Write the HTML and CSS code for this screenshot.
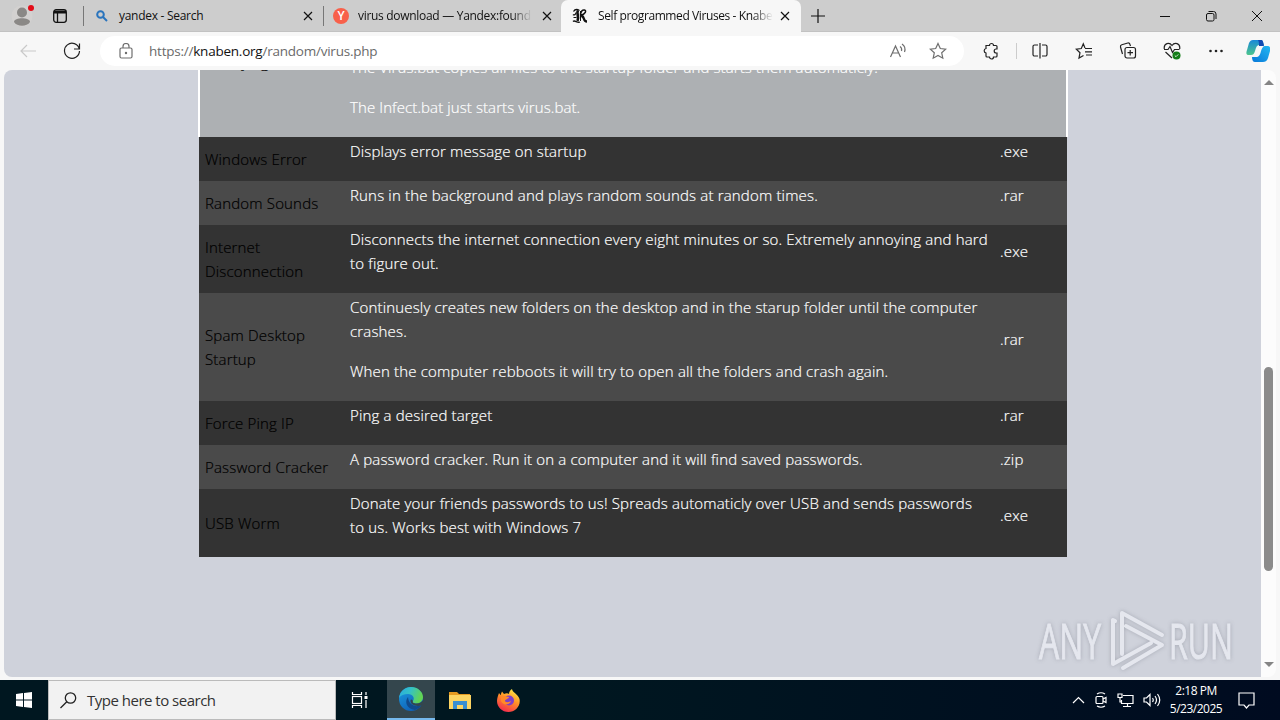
FILE: index.html
```html
<!DOCTYPE html>
<html lang="en">
<head>
  <meta charset="UTF-8">
  <title>Self programmed Viruses - Knaben</title>
  <meta name="viewport" content="width=device-width, initial-scale=1.0">
  <link rel="stylesheet" href="styles.css">
</head>
<body>

  <!-- tabs -->
  <header class="tabbar">
    <div class="profile">
      <svg width="22" height="22" viewBox="0 0 22 22"><circle cx="11" cy="11" r="10.500" fill="#d3d1d0"/><circle cx="11" cy="7.500" r="5" fill="#8a8886"/><path d="M3 17c0-5 16-5 16 0-3 5-13 5-16 0z" fill="#8a8886"/></svg>
      <span class="dot"></span>
    </div>
    <svg class="workspaces" width="16" height="16" viewBox="0 0 16 16" fill="none" stroke="#111" stroke-width="1.300"><rect x="1.700" y="1.700" width="12.600" height="12.600" rx="2.500"/><path d="M2 4h12" stroke-width="3"/><path d="M5.500 5v9"/></svg>
    <div class="tab tab-search">
      <svg width="12" height="12" viewBox="0 0 12 12" fill="none" stroke="#2a74bd" stroke-width="2"><circle cx="4.500" cy="4.500" r="3.300"/><path d="M7 7l4 4"/></svg>
      <span class="title">yandex - Search</span>
      <svg class="x" width="10" height="10" viewBox="0 0 10 10"><path d="M1 1l8 8M9 1l-8 8"/></svg>
    </div>
    <div class="tab tab-yandex">
      <span class="ya">Y</span>
      <span class="title fade">virus download — Yandex:found</span>
      <svg class="x" width="10" height="10" viewBox="0 0 10 10"><path d="M1 1l8 8M9 1l-8 8"/></svg>
    </div>
    <div class="tab tab-active">
      <svg width="16" height="16" viewBox="0 0 16 16" fill="none" stroke="#111"><path d="M1.500 3.500C3 1 5 1 7.500 2.500M1 6.500c1 1 3 0 3-2M1 13.500c2-2 4 2 7 .5" stroke-width="1.300"/><path d="M6 2.500c-2 3 1.500 5-.5 10.500" stroke-width="2.600"/><path d="M8.500 7.500c0-4 2-6 4-5.500 2 .5 1.500 4-4 5.500" stroke-width="1.500"/><path d="M9 8c4-.5 1.500 5.500 6 5.500" stroke-width="2.400"/><path d="M8.500 3v10M1.500 9.500h3" stroke-width="1"/></svg>
      <span class="title fade">Self programmed Viruses - Knabe</span>
      <svg class="x" width="10" height="10" viewBox="0 0 10 10"><path d="M1 1l8 8M9 1l-8 8"/></svg>
    </div>
    <svg class="newtab" width="14" height="14" viewBox="0 0 14 14" stroke="#111" stroke-width="1.200"><path d="M7 0v14M0 7h14"/></svg>
    <div class="window-buttons">
      <svg width="12" height="12" viewBox="0 0 12 12"><path d="M1 6.500h10"/></svg>
      <svg width="12" height="12" viewBox="0 0 12 12"><rect x="1.500" y="3.500" width="7.500" height="7.500" rx="1.500"/><path d="M3.500 1.500h5a2.500 2.500 0 0 1 2.500 2.500v5"/></svg>
      <svg width="12" height="12" viewBox="0 0 12 12"><path d="M1 1l10 10M11 1L1 11"/></svg>
    </div>
  </header>

  <!-- address bar -->
  <div class="toolbar">
    <svg class="back" width="18" height="18" viewBox="0 0 18 18"><path d="M17 9H2M8 3L2 9l6 6"/></svg>
    <svg class="reload" width="18" height="18" viewBox="0 0 18 18"><path d="M16.300 7A7.500 7.500 0 1 0 16.500 9M16.500 1.500V7H11"/></svg>
    <div class="address">
      <svg class="lock" width="14" height="16" viewBox="0 0 14 16"><rect x="1" y="5" width="12" height="10" rx="1.500"/><path d="M4 5V3.500a3 3 0 0 1 6 0V5"/><circle cx="7" cy="10" r=".6"/></svg>
      <span class="url">https://<b>knaben.org</b>/random/virus.php</span>
      <svg class="read" width="18" height="16" viewBox="0 0 18 16"><path d="M1.500 14L6.500 3l5 11M3.300 10h6.400M11 3.500c1.500 1 2 2.500 1.500 4.500M13 1c3 2 3.500 5 2.500 8"/></svg>
      <svg class="fav" width="18" height="18" viewBox="0 0 18 18"><path d="M9 1.500l2.300 5 5.400.6-4 3.700 1.100 5.400L9 13.500l-4.800 2.700 1.100-5.400-4-3.700 5.400-.6z"/></svg>
    </div>
    <div class="tools">
      <svg width="18" height="18" viewBox="0 0 18 18"><path d="M4 3.500h3.500a2 2 0 0 1 4 0H14a1 1 0 0 1 1 1V7h-.8a2 2 0 0 0 0 4h.8v3a1 1 0 0 1-1 1h-2.500a2 2 0 0 1-4 0H5a1 1 0 0 1-1-1v-3a2.300 2.300 0 0 1 0-4.500z"/></svg>
      <i class="sep"></i>
      <svg width="18" height="18" viewBox="0 0 18 18"><path d="M7 3H3.500A1.500 1.500 0 0 0 2 4.500v8A1.500 1.500 0 0 0 3.500 14H7M11 3h3.500A1.500 1.500 0 0 1 16 4.500v8a1.500 1.500 0 0 1-1.500 1.500H11M9 1v15.500"/></svg>
      <svg width="18" height="18" viewBox="0 0 18 18"><path d="M10 6L8.300 1.800 6.300 6.500l-5 .7 3.700 3.500-1 5.300 4.500-2.500M10 6.500h7M10 9.800h7M11 13h6"/></svg>
      <svg width="18" height="18" viewBox="0 0 18 18"><path d="M3.500 12L1.500 5a2 2 0 0 1 1.300-2.300l6-1.700A2 2 0 0 1 11 2.500l.5 1.500"/><rect x="6" y="5.500" width="10.500" height="10.500" rx="2"/><path d="M11.200 8v5.500M8.500 10.700H14"/></svg>
      <svg width="18" height="18" viewBox="0 0 18 18"><path d="M1.300 7C.5 1 6.500 0 9 3.500 11.500 0 17.500 1 16.700 7M1 7.500h4l2-3 2.500 6 2-3h5M2.500 10L9 16"/><circle cx="13.500" cy="13.500" r="4" fill="#137d17" stroke="none"/><path d="M11.800 13.500l1.200 1.200 2.300-2.300" stroke="#fff" stroke-width=".8"/></svg>
      <svg width="18" height="18" viewBox="0 0 18 18"><g fill="#222" stroke="none"><circle cx="3.500" cy="9" r="1.300"/><circle cx="9" cy="9" r="1.300"/><circle cx="14.500" cy="9" r="1.300"/></g></svg>
    </div>
    <svg class="copilot" width="24" height="24" viewBox="0 0 24 24">
      <defs>
        <linearGradient id="cpA" x1="0" y1="0" x2="0" y2="1"><stop offset="0" stop-color="#1988d8"/><stop offset="1" stop-color="#4cc58c"/></linearGradient>
        <linearGradient id="cpB" x1="0" y1="1" x2="1" y2="0"><stop offset="0" stop-color="#0878d8"/><stop offset="1" stop-color="#22b8f2"/></linearGradient>
      </defs>
      <path d="M7 1h8c2 0 2 2 3 5h-5c-2 0-3 2-4 6-1 3-2 4-4 4H3c-3 0-3-2-2-5l2-7c1-2 2-3 4-3z" fill="url(#cpA)"/>
      <path d="M17 23H9c-2 0-3-2-3-5h4c3 0 4-2 5-6 1-3 2-5 4-5h2c3 0 4 2 3 5l-2 7c-1 3-3 4-5 4z" fill="url(#cpB)"/>
      <path d="M13 1h2c2 0 2 2 3 6h-5c0-3 0-4-1-6z" fill="#124ab3"/>
    </svg>
  </div>

  <!-- page -->
  <main class="frame">
    <div class="page">
      <table class="viruses">
        <tr class="hover">
          <td class="name">Annoying</td>
          <td class="desc"><p>The Virus.bat copies all files to the startup folder and starts them automaticly.</p><p>The Infect.bat just starts virus.bat.</p></td>
          <td></td>
        </tr>
        <tr>
          <td class="name">Windows Error</td>
          <td class="desc"><p>Displays error message on startup</p></td>
          <td><p>.exe</p></td>
        </tr>
        <tr>
          <td class="name">Random Sounds</td>
          <td class="desc"><p>Runs in the background and plays random sounds at random times.</p></td>
          <td><p>.rar</p></td>
        </tr>
        <tr>
          <td class="name">Internet<br>Disconnection</td>
          <td class="desc"><p>Disconnects the internet connection every eight minutes or so. Extremely annoying and hard<br>to figure out.</p></td>
          <td><p>.exe</p></td>
        </tr>
        <tr>
          <td class="name">Spam Desktop<br>Startup</td>
          <td class="desc"><p>Continuesly creates new folders on the desktop and in the starup folder until the computer<br>crashes.</p><p>When the computer rebboots it will try to open all the folders and crash again.</p></td>
          <td><p>.rar</p></td>
        </tr>
        <tr>
          <td class="name">Force Ping IP</td>
          <td class="desc"><p>Ping a desired target</p></td>
          <td><p>.rar</p></td>
        </tr>
        <tr>
          <td class="name">Password Cracker</td>
          <td class="desc"><p>A password cracker. Run it on a computer and it will find saved passwords.</p></td>
          <td><p>.zip</p></td>
        </tr>
        <tr>
          <td class="name">USB Worm</td>
          <td class="desc"><p>Donate your friends passwords to us! Spreads automaticly over USB and sends passwords<br>to us. Works best with Windows 7</p></td>
          <td><p>.exe</p></td>
        </tr>
      </table>
    </div>
    <div class="scrollbar">
      <i class="up"></i>
      <i class="thumb"></i>
      <i class="down"></i>
    </div>
    <svg class="watermark" width="204" height="68" viewBox="0 0 204 68">
      <text x="7" y="51" textLength="62" lengthAdjust="spacingAndGlyphs">ANY</text>
      <text x="137" y="51" textLength="64" lengthAdjust="spacingAndGlyphs">RUN</text>
      <g fill="none" stroke="#eceef5" stroke-width="4" stroke-linecap="round" stroke-linejoin="round">
        <path d="M83 13L81 12V56L119 35M90 46V5L130 27M94 18L130 37L91 60"/>
      </g>
    </svg>
  </main>

  <!-- taskbar -->
  <footer class="taskbar">
    <div class="start"><svg width="16" height="16" viewBox="0 0 16 16" fill="#fff"><path d="M0 2l7-1v6.500H0zM8 .9L16 0v7.500H8zM0 8.500h7V15l-7-1zM8 8.500h8V16l-8-.9z"/></svg></div>
    <div class="searchbox">
      <svg width="17" height="17" viewBox="0 0 17 17" fill="none" stroke="#222" stroke-width="1.300"><circle cx="10.500" cy="6" r="5.200"/><path d="M6.800 9.700L.5 16"/></svg>
      <span>Type here to search</span>
    </div>
    <div class="app taskview"><svg width="17" height="16" viewBox="0 0 17 16" fill="none" stroke="#fff" stroke-width="1.200"><rect x="1.500" y="4.500" width="9" height="7"/><path d="M1.500 0v2.500h9V0M1.500 16v-2.500h9V16M15 0v3M15 8v8"/><path d="M13.500 5.500h3" stroke-width="3"/></svg></div>
    <div class="app open">
      <svg width="24" height="24" viewBox="0 0 24 24">
        <defs>
          <linearGradient id="edA" x1="0" y1="0" x2="1" y2=".3"><stop offset="0" stop-color="#28a9e0"/><stop offset=".5" stop-color="#35c1c6"/><stop offset="1" stop-color="#62d453"/></linearGradient>
          <linearGradient id="edB" x1="0" y1="0" x2=".6" y2="1"><stop offset="0" stop-color="#1b9de2"/><stop offset="1" stop-color="#0f5fb5"/></linearGradient>
        </defs>
        <circle cx="12" cy="12" r="12" fill="url(#edB)"/>
        <path d="M0 11C1 4 6 0 12 0c7 0 12 5 12 10 0 4-3 6.500-6.500 6.500-3 0-4.500-1-3.500-2.500 2-3 0-7-5-7-4 0-7.500 1.500-9 4z" fill="url(#edA)"/>
        <path d="M9 10c-4 5-1 12 7 13 3-1 5-3 6.500-5-6 3-13 0-13.500-8z" fill="#114a8b"/>
        <path d="M14 14c-1 1.500.5 2.500 3.500 2.500 3 0 4.500-1 6.500-3v3l-1.500 2c-6 1.500-11-1-11-4.500 0-2 1.500-2 2.500 0z" fill="#34464d"/>
      </svg>
    </div>
    <div class="app"><svg width="22" height="19" viewBox="0 0 22 19"><path d="M0 1h8l2 2h11v3H0z" fill="#e59a20"/><path d="M0 4h22v14H0z" fill="#fcd462"/><path d="M4 18v-8h14v8h-4v-4H8v4z" fill="#3a8ed0"/></svg></div>
    <div class="app">
      <svg width="23" height="23" viewBox="0 0 23 23">
        <defs><linearGradient id="ff" x1=".8" y1="0" x2=".3" y2="1"><stop offset="0" stop-color="#fff04a"/><stop offset=".45" stop-color="#ff9426"/><stop offset="1" stop-color="#f5284f"/></linearGradient></defs>
        <path d="M2 4l1.500 2L5 2.500 7 5c2-1 4-1 5 0 0-2 1-4 3-5 0 3 6 5 7.500 10C24 17 18 23 11.500 23S0 18 0 12c0-3 1-5 2-8z" fill="url(#ff)"/>
        <circle cx="12" cy="11.500" r="5" fill="#7e3fc8"/>
        <path d="M4 8c3-2 5 0 8 0 0 2-4 2-4 4 1 2 4 1 6 0-1 4-8 5-10 0z" fill="#ff8a28"/>
      </svg>
    </div>
    <div class="tray">
      <svg width="13" height="8" viewBox="0 0 13 8"><path d="M1 7l5.500-5.500L12 7"/></svg>
      <svg width="14" height="16" viewBox="0 0 14 16"><rect x="2" y="4.500" width="7" height="7" rx="1"/><path d="M9 7l3-1.500v5L9 9M3 2q4-2.500 8 0M3 14q4 2.500 8 0"/></svg>
      <svg width="17" height="14" viewBox="0 0 17 14"><path d="M6 2.500h10v8H4.500V7M10.500 10.500v3M6 13.500h8M1 1h4v3.500H1zM3 4.500V9h2"/></svg>
      <svg width="18" height="14" viewBox="0 0 18 14"><path d="M1 5h2.500L7 1.500v11L3.500 9H1zM9.500 5q1.500 2 0 4M12 3q3 4 0 8M14.500 1q4.500 6 0 12"/></svg>
    </div>
    <div class="clock"><span>2:18 PM</span><span>5/23/2025</span></div>
    <svg class="notify" width="17" height="17" viewBox="0 0 17 17" fill="none" stroke="#fff" stroke-width="1.200"><path d="M1 1h15v12h-5l-2.500 3L6 13H1z"/></svg>
  </footer>

</body>
</html>
```
FILE: styles.css
```css
* {
  box-sizing: border-box;
}
body {
  margin: 0;
  width: 1280px;
  height: 720px;
  overflow: hidden;
  display: flex;
  flex-direction: column;
  background: #f7f7f7;
  font-family: "Open Sans", "Noto Sans", sans-serif;
  color: #111;
}
svg {
  flex: none;
  display: block;
}
p {
  margin: 0 0 16px;
}

/* tabs */
.tabbar {
  height: 32px;
  flex: none;
  display: flex;
  align-items: center;
  background: #cdcdcd;
  border-bottom: 1px solid #c2c2c2;
}
.profile {
  position: relative;
  margin-left: 11px;
}
.dot {
  position: absolute;
  top: 0;
  right: -1px;
  width: 6px;
  height: 6px;
  border-radius: 50%;
  background: #e30c18;
}
.workspaces {
  margin-left: 19px;
  margin-right: 15px;
}
.tab {
  height: 32px;
  display: flex;
  align-items: center;
  font-size: 12px;
  line-height: 16px;
  letter-spacing: -0.28px;
  white-space: nowrap;
}
.title {
  flex: 1;
}
.fade {
  -webkit-mask-image: linear-gradient(to right, #000 88%, transparent);
  mask-image: linear-gradient(to right, #000 88%, transparent);
}
.x {
  stroke: #111;
  stroke-width: 1.2;
}
.tab-search {
  width: 240px;
  padding: 0 10px 0 13px;
  background: linear-gradient(#777, #777) 0 50% / 1px 20px no-repeat;
}
.tab-search .title {
  margin-left: 11px;
}
.tab-yandex {
  width: 238px;
  padding: 0 9px 0 10px;
  background: linear-gradient(#777, #777) 0 50% / 1px 20px no-repeat;
}
.tab-yandex .title {
  margin: 0 10px 0 9px;
  letter-spacing: -0.3px;
}
.ya {
  width: 16px;
  height: 16px;
  border-radius: 50%;
  background: #f8604a;
  color: #fff;
  text-align: center;
  font-weight: 600;
}
.tab-active {
  width: 240px;
  padding: 0 11px;
  background: #f7f7f7;
  border-radius: 7px 7px 0 0;
}
.tab-active .title {
  margin: 0 7px 0 10px;
  letter-spacing: -0.4px;
}
.newtab {
  margin-left: 10px;
}
.window-buttons {
  margin-left: auto;
  display: flex;
  gap: 34px;
  padding-right: 17px;
}
.window-buttons svg {
  fill: none;
  stroke: #111;
}

/* address bar */
.toolbar {
  height: 38px;
  flex: none;
  display: flex;
  align-items: center;
  padding-left: 19px;
}
.toolbar svg {
  fill: none;
  stroke: #222;
  stroke-width: 1.2;
}
.toolbar .back {
  stroke: #c9c9c9;
}
.reload {
  margin-left: 26px;
}
.address {
  width: 864px;
  height: 30px;
  margin-left: 19px;
  padding: 0 17px 0 19px;
  display: flex;
  align-items: center;
  background: #fff;
  border-radius: 15px;
}
.toolbar .address svg {
  stroke: #6e6e6e;
}
.url {
  flex: 1;
  margin-left: 16px;
  font-size: 13.5px;
  letter-spacing: -0.23px;
  color: #6a6a6a;
}
.url b {
  font-weight: normal;
  color: #111;
}
.read {
  margin-right: 22px;
}
.tools {
  display: flex;
  align-items: center;
  margin-left: 18px;
  gap: 26px;
}
.sep {
  width: 1px;
  height: 16px;
  margin: 0 -12px 0 -10px;
  background: #ccc;
}
.toolbar .copilot {
  margin-left: 21px;
  stroke: none;
}

/* page */
.frame {
  position: relative;
  height: 607px;
  flex: none;
  margin: 0 4px;
  display: flex;
  overflow: hidden;
  border-radius: 8px;
}
.page {
  width: 1257px;
  overflow: hidden;
  background: #cfd2db;
}
.viruses {
  width: 868px;
  margin: -17px 0 0 195px;
  table-layout: fixed;
  border-collapse: collapse;
  font-size: 15px;
  font-weight: 300;
  line-height: 24px;
  letter-spacing: 0.17px;
  color: #fff;
  -webkit-text-stroke: 0.2px;
}
.viruses tr {
  background: #333;
}
.viruses tr:nth-child(odd) {
  background: #4a4a4a;
}
.viruses .hover {
  background: #adb0b3 !important;
  box-shadow: inset 1px 0 #fff, inset -1px 0 #fff, 1px 0 #fff, -1px 0 #fff;
}
.viruses td {
  padding: 2px 0 2px 6px;
  white-space: nowrap;
  vertical-align: middle;
}
.viruses .name {
  width: 145px;
  color: #000;
}
.viruses .desc {
  width: 650px;
}
.viruses .hover .name {
  vertical-align: top;
  padding-top: 0;
  line-height: 19px;
}
.viruses .hover .desc {
  letter-spacing: 0.1px;
}
.scrollbar {
  width: 15px;
  display: flex;
  flex-direction: column;
  align-items: center;
  padding: 10px 0;
  background: #fcfcfc;
}
.up, .down {
  border: 5px solid transparent;
  border-top: 0;
  border-bottom: 5px solid #858585;
}
.down {
  margin-top: auto;
  border-bottom: 0;
  border-top: 5px solid #858585;
}
.thumb {
  width: 9px;
  height: 204px;
  margin-top: 282px;
  border-radius: 5px;
  background: #8b8b8b;
}
.watermark {
  position: absolute;
  right: 40px;
  bottom: 1px;
  filter: drop-shadow(0 0 2px #9a9da8);
  opacity: .75;
}
.watermark text {
  font-family: "Open Sans", sans-serif;
  font-size: 50px;
  fill: #eceef5;
  stroke: #eceef5;
  stroke-width: 1;
}

/* taskbar */
.taskbar {
  height: 40px;
  flex: none;
  margin-top: 3px;
  display: flex;
  align-items: center;
  background: linear-gradient(to right, #001720 45%, #000b20);
}
.start {
  width: 48px;
  display: flex;
  justify-content: center;
}
.searchbox {
  width: 288px;
  height: 40px;
  padding-left: 11px;
  display: flex;
  align-items: center;
  gap: 10px;
  background: #f2f2f2;
  border: 1px solid #bbb;
  font-size: 15px;
  letter-spacing: -0.5px;
  color: #333;
}
.app {
  width: 49px;
  height: 40px;
  display: flex;
  align-items: center;
  justify-content: center;
}
.taskview {
  width: 51px;
  padding-right: 5px;
}
.open {
  width: 48px;
  background: #34464d;
  border-bottom: 2px solid #76b9ed;
}
.tray {
  margin-left: auto;
  display: flex;
  align-items: center;
  gap: 9px;
}
.tray svg {
  fill: none;
  stroke: #fff;
  stroke-width: 1.2;
}
.clock {
  width: 70px;
  display: flex;
  flex-direction: column;
  align-items: center;
  font-size: 12px;
  line-height: 18px;
  letter-spacing: -0.5px;
  color: #fff;
}
.notify {
  margin: 0 25px 0 7px;
}
```
